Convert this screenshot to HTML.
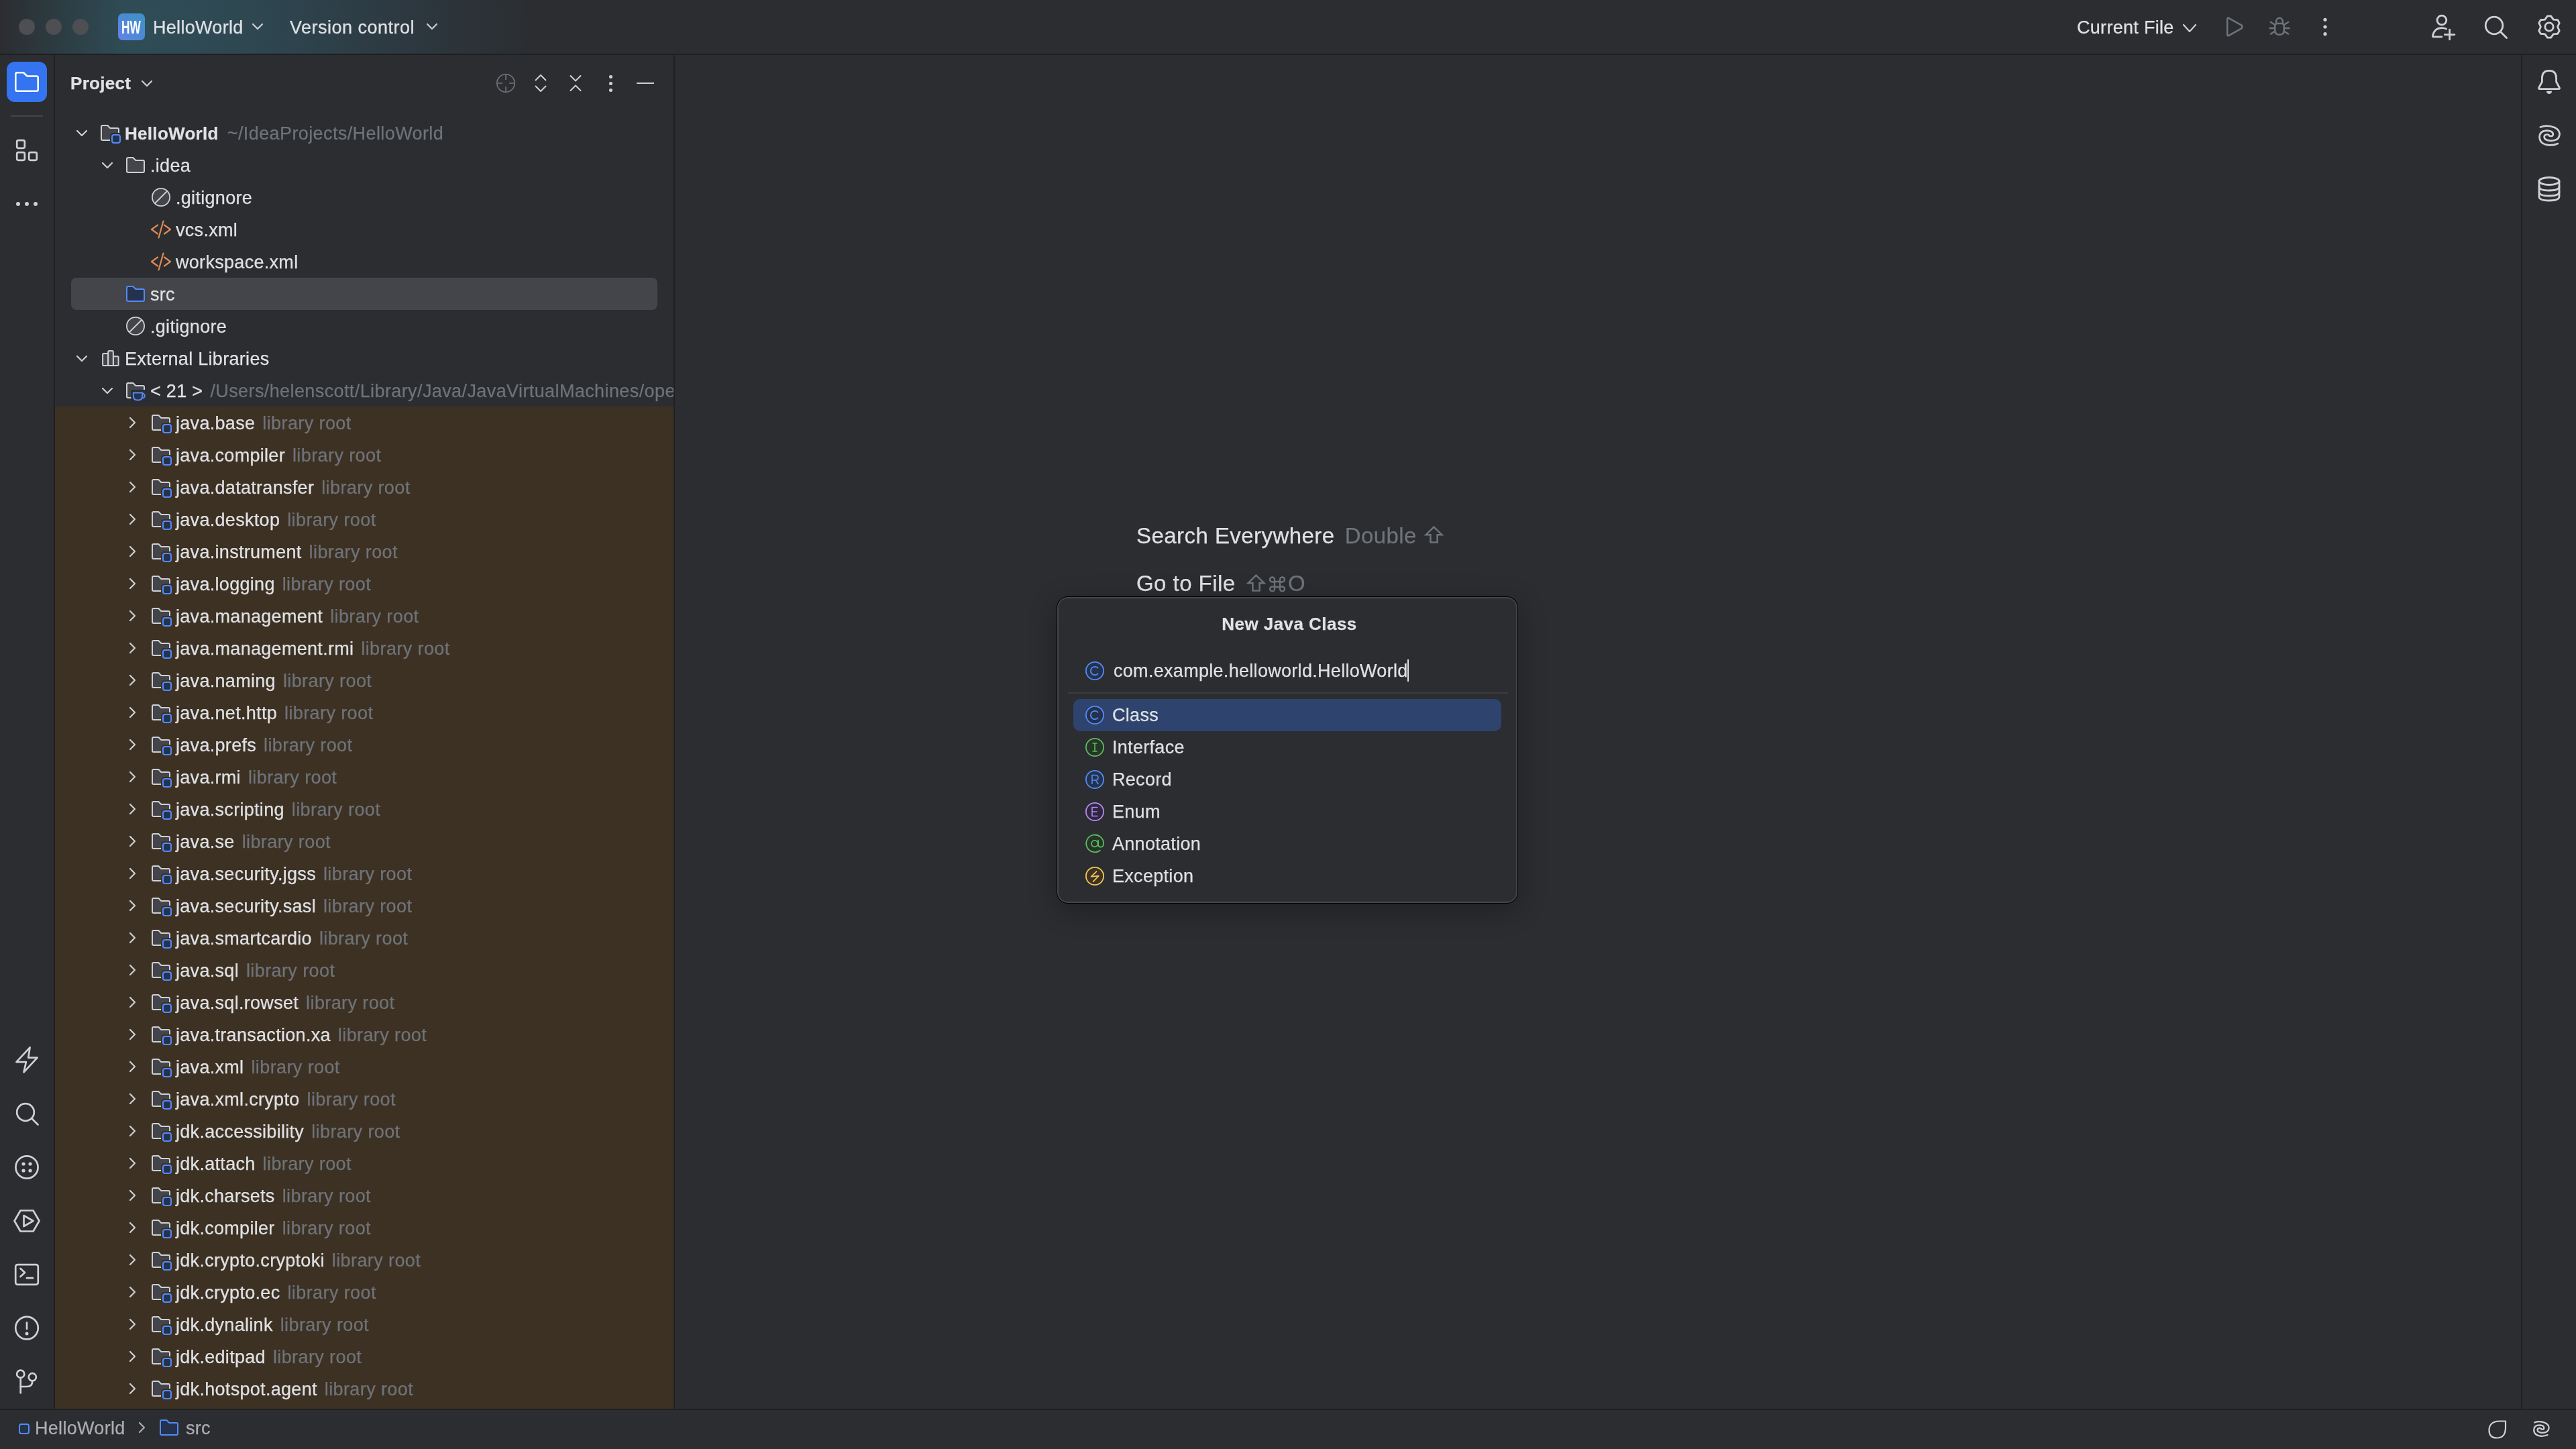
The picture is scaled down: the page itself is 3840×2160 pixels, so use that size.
<!DOCTYPE html>
<html><head><meta charset="utf-8"><style>
*{box-sizing:border-box;margin:0;padding:0}
html,body{width:3840px;height:2160px;overflow:hidden;background:#2B2D30;font-family:"Liberation Sans",sans-serif;color:#DFE1E5}
#root{position:absolute;left:0;top:0;width:3840px;height:2160px;overflow:hidden;will-change:transform}
.t,.b,.s33{-webkit-text-stroke:0.25px currentColor}
.a{position:absolute}
.t{position:absolute;font-size:27px;letter-spacing:0.3px;white-space:nowrap;line-height:48px}
.b{position:absolute;font-size:26px;font-weight:bold;letter-spacing:0.3px;white-space:nowrap;line-height:48px}
.g{color:#6F737A}
svg{position:absolute;overflow:visible}
</style></head><body>
<div id="root"><div class="a" style="left:0;top:0;width:3840px;height:80px;background:#2B2D30"></div>
<div class="a" style="left:0;top:0;width:1400px;height:80px;background:linear-gradient(to right,#2B2D30 0px,rgba(43,45,48,0.6) 60px,rgba(43,45,48,0) 190px),radial-gradient(ellipse 600px 420px at 200px 40px,#2F4E58 0%,#2E4650 33%,#2D3840 68%,#2B2D30 100%)"></div>
<div class="a" style="left:28px;top:28px;width:24px;height:24px;border-radius:50%;background:#4E4F53"></div>
<div class="a" style="left:68px;top:28px;width:24px;height:24px;border-radius:50%;background:#4E4F53"></div>
<div class="a" style="left:108px;top:28px;width:24px;height:24px;border-radius:50%;background:#4E4F53"></div>
<div class="a" style="left:176px;top:20px;width:40px;height:40px;border-radius:7px;background:linear-gradient(45deg,#6383EB 0%,#4C89D6 50%,#3D92C2 100%)"></div>
<div class="a" style="left:173px;top:20px;width:40px;height:40px;line-height:42px;text-align:center;color:#fff;font-size:27px;font-weight:bold"><span style="display:inline-block;transform:scaleX(0.64)">HW</span></div>
<div class="t" style="left:228px;top:17px">HelloWorld</div>
<svg style="left:376px;top:35px" width="16" height="9" viewBox="0 0 16 9"><path d="M1 1 L8.0 8 L15 1" fill="none" stroke="#CED0D6" stroke-width="2.2" stroke-linecap="round" stroke-linejoin="round"/></svg>
<div class="t" style="left:432px;top:17px;letter-spacing:0.5px">Version control</div>
<svg style="left:636px;top:35px" width="16" height="9" viewBox="0 0 16 9"><path d="M1 1 L8.0 8 L15 1" fill="none" stroke="#CED0D6" stroke-width="2.2" stroke-linecap="round" stroke-linejoin="round"/></svg>
<div class="t" style="left:3096px;top:17px">Current File</div>
<svg style="left:3254px;top:36px" width="20" height="12" viewBox="0 0 20 12"><path d="M1 1 L10.0 11 L19 1" fill="none" stroke="#CED0D6" stroke-width="2.2" stroke-linecap="round" stroke-linejoin="round"/></svg>
<svg style="left:0;top:0" width="3840" height="80" viewBox="0 0 3840 80"><path d="M3320.2 28.5 Q3320.2 25.8 3322.6 27.1 L3341.4 37.6 Q3343.6 40 3341.4 42.4 L3322.6 52.9 Q3320.2 54.2 3320.2 51.5 Z" fill="none" stroke="#6F737A" stroke-width="2.5" stroke-linejoin="round"/><g fill="none" stroke="#6F737A" stroke-width="2.5" stroke-linecap="round" stroke-linejoin="round"><path d="M3393.2 33.5 V32 A4.8 5.2 0 0 1 3402.8 32 V33.5"/><path d="M3391.25 39 Q3391.25 35 3395 35 H3401 Q3404.75 35 3404.75 39 V45 Q3404.75 51.8 3398 51.8 Q3391.25 51.8 3391.25 45 Z"/><path d="M3384.9 33 L3390 36.2 M3383.5 42 L3390 42 M3385 50.5 L3390 47.4 M3411.1 33 L3406 36.2 M3412.5 42 L3406 42 M3411 50.5 L3406 47.4"/></g><g fill="#CED0D6"><circle cx="3466" cy="29.3" r="2.6"/><circle cx="3466" cy="40" r="2.6"/><circle cx="3466" cy="50.7" r="2.6"/></g><g fill="none" stroke="#CED0D6" stroke-width="2.8" stroke-linecap="round" stroke-linejoin="round"><circle cx="3639.9" cy="30.1" r="6.9"/><path d="M3639.9 54.8 H3627.5 Q3626 54.8 3626.5 53 Q3629 41.6 3640 41.6 Q3643.8 41.6 3646.5 43"/><path d="M3651.6 44.2 V58.8 M3644.3 51.6 H3658.9"/><circle cx="3718" cy="38" r="12.8"/><path d="M3727.3 47.3 L3736.6 56.6"/><path d="M3802.55 23.90 L3797.45 23.90 L3793.70 29.09 L3787.33 29.74 L3784.78 34.16 L3787.40 40.00 L3784.78 45.84 L3787.33 50.26 L3793.70 50.91 L3797.45 56.10 L3802.55 56.10 L3806.30 50.91 L3812.67 50.26 L3815.22 45.84 L3812.60 40.00 L3815.22 34.16 L3812.67 29.74 L3806.30 29.09 L3802.55 23.90 Z"/><circle cx="3800" cy="40" r="6.2"/></g></svg>
<div class="a" style="left:0;top:80px;width:3840px;height:2px;background:#1E1F22"></div>
<div class="a" style="left:80px;top:82px;width:2px;height:2018px;background:#1E1F22"></div>
<div class="a" style="left:1004px;top:82px;width:2px;height:2018px;background:#1E1F22"></div>
<div class="a" style="left:3758px;top:82px;width:2px;height:2018px;background:#1E1F22"></div>
<div class="a" style="left:0;top:2100px;width:3840px;height:2px;background:#1E1F22"></div>
<div class="a" style="left:10px;top:92px;width:60px;height:60px;border-radius:12px;background:#3574F0"></div>
<svg style="left:10px;top:92px" width="60" height="60" viewBox="0 0 60 60"><path d="M15.5 16.3 H25 L30.5 21.5 H44.5 Q46.7 21.5 46.7 23.7 V41.5 Q46.7 43.7 44.5 43.7 H15.5 Q13.3 43.7 13.3 41.5 V18.5 Q13.3 16.3 15.5 16.3 Z" fill="none" stroke="#fff" stroke-width="2.6" stroke-linejoin="round"/></svg>
<div class="a" style="left:16px;top:172px;width:48px;height:2px;background:#43454A"></div>
<svg style="left:20px;top:204px" width="40" height="40" viewBox="0 0 40 40"><g fill="none" stroke="#CED0D6" stroke-width="2.7"><rect x="5.2" y="5.2" width="11.6" height="11.6" rx="2.2"/><rect x="5.2" y="23.2" width="11.6" height="11.6" rx="2.2"/><rect x="23.2" y="23.2" width="11.6" height="11.6" rx="2.2"/></g></svg>
<div class="a" style="left:24px;top:301px;width:6px;height:6px;border-radius:50%;background:#CED0D6"></div>
<div class="a" style="left:37px;top:301px;width:6px;height:6px;border-radius:50%;background:#CED0D6"></div>
<div class="a" style="left:50px;top:301px;width:6px;height:6px;border-radius:50%;background:#CED0D6"></div>
<svg style="left:0;top:0" width="80" height="2160" viewBox="0 0 80 2160"><g fill="none" stroke="#CED0D6" stroke-width="2.7" stroke-linejoin="round" stroke-linecap="round"><path d="M44.6 1561.4 L24.4 1583.1 L38.9 1583.1 L35.5 1598.3 L55.6 1576.6 L42.2 1576.6 Z"/><circle cx="38" cy="1658" r="12.8"/><path d="M47.2 1667.2 L56.5 1676.5"/><circle cx="40" cy="1740" r="16.6"/><path d="M30.5 1804.5 L49.5 1804.5 L58.5 1820 L49.5 1835.5 L30.5 1835.5 L21.5 1820 Z"/><path d="M35.5 1812 L49.5 1820 L35.5 1828 Z"/><rect x="23.2" y="1885.2" width="33.6" height="29.6" rx="3"/><path d="M30.5 1891 L37 1897 L30.5 1903"/><path d="M40 1905.2 L49 1905.2"/><circle cx="40" cy="1979.6" r="16.8"/><path d="M40 1971.5 L40 1981"/><circle cx="30.7" cy="2048.2" r="5.6"/><circle cx="48.3" cy="2052.8" r="5.6"/><path d="M30.7 2053.8 L30.7 2076.5"/><path d="M48.3 2058.4 Q48.3 2067 40 2067 L30.7 2067"/></g><g fill="#CED0D6"><circle cx="35" cy="1735" r="2.6"/><circle cx="45" cy="1735" r="2.6"/><circle cx="35" cy="1745" r="2.6"/><circle cx="45" cy="1745" r="2.6"/><circle cx="40" cy="1988" r="2.5"/></g></svg>
<svg style="left:3760px;top:80px" width="80" height="240" viewBox="0 0 80 240"><g fill="none" stroke="#CED0D6" stroke-width="2.8" stroke-linejoin="round" stroke-linecap="round"><path d="M40 25.3 Q29.4 25.3 29.4 36.5 V42 L24.8 50.5 Q23.8 52.7 26 52.7 H54 Q56.2 52.7 55.2 50.5 L50.6 42 V36.5 Q50.6 25.3 40 25.3 Z"/><ellipse cx="40" cy="190" rx="15" ry="5.5"/><path d="M25 190 L25 213 Q25 219 40 219 Q55 219 55 213 L55 190"/><path d="M25 198 Q25 204 40 204 Q55 204 55 198"/><path d="M25 206 Q25 212 40 212 Q55 212 55 206"/></g><path d="M35.8 55.8 H44.2 Q43.5 60.1 40 60.1 Q36.5 60.1 35.8 55.8 Z" fill="#CED0D6"/></svg>
<svg style="left:3776px;top:178px" width="48.0" height="48.0" viewBox="0 0 48 48"><g fill="none" stroke="#CED0D6" stroke-width="2.70" stroke-linecap="round"><path d="M10.9 11.4 Q21 7.5 32 12 Q39.8 16 39.5 22.5 Q38.5 31.8 26.5 31.8 Q16.6 31.5 16.6 25.8 Q17 22.5 21.2 22.5 Q23.5 22.5 24.2 23.8"/><path d="M36.8 36.1 Q31 38.6 24 38.4 Q9.6 37 9.6 26 Q10 16.6 21.2 16.6 Q29.8 17 29.8 22.5 Q29.5 25 26.5 25 Q24.8 25 24.2 24.5"/></g></svg>
<div class="b" style="left:105px;top:100px">Project</div>
<svg style="left:211px;top:120px" width="16" height="9" viewBox="0 0 16 9"><path d="M1 1 L8.0 8 L15 1" fill="none" stroke="#CED0D6" stroke-width="2.2" stroke-linecap="round" stroke-linejoin="round"/></svg>
<svg style="left:738px;top:108px" width="32" height="32" viewBox="0 0 32 32"><g fill="none" stroke="#6F737A" stroke-width="1.6"><circle cx="16" cy="16" r="13.2"/><path d="M16 3 L16 11 M16 21 L16 29 M3 16 L11 16 M21 16 L29 16"/></g></svg>
<svg style="left:790px;top:108px" width="32" height="32" viewBox="0 0 32 32"><g fill="none" stroke="#CED0D6" stroke-width="2" stroke-linecap="round" stroke-linejoin="round"><path d="M8.5 11.5 L16 4 L23.5 11.5"/><path d="M8.5 20.5 L16 28 L23.5 20.5"/></g></svg>
<svg style="left:842px;top:108px" width="32" height="32" viewBox="0 0 32 32"><g fill="none" stroke="#CED0D6" stroke-width="2" stroke-linecap="round" stroke-linejoin="round"><path d="M8.5 5 L16 12.5 L23.5 5"/><path d="M8.5 27 L16 19.5 L23.5 27"/></g></svg>
<div class="a" style="left:908px;top:112px;width:4.5px;height:4.5px;border-radius:50%;background:#CED0D6"></div>
<div class="a" style="left:908px;top:122px;width:4.5px;height:4.5px;border-radius:50%;background:#CED0D6"></div>
<div class="a" style="left:908px;top:132px;width:4.5px;height:4.5px;border-radius:50%;background:#CED0D6"></div>
<div class="a" style="left:949px;top:123px;width:26px;height:2px;background:#CED0D6"></div>
<div class="a" style="left:82px;top:82px;width:922px;height:2018px;overflow:hidden">
<div class="a" style="left:0;top:524px;width:922px;height:1494px;background:#3D3123"></div>
<div class="a" style="left:24px;top:332px;width:874px;height:48px;border-radius:8px;background:#43454A"></div>
<svg style="left:32px;top:112px" width="16" height="9" viewBox="0 0 16 9"><path d="M1 1 L8.0 8 L15 1" fill="none" stroke="#CED0D6" stroke-width="2.2" stroke-linecap="round" stroke-linejoin="round"/></svg>
<svg style="left:66px;top:100px" width="32" height="32" viewBox="0 0 32 32"><path d="M5 5 H12.3 L16.3 9 H27 Q29 9 29 11 V25 Q29 27 27 27 H5 Q3 27 3 25 V7 Q3 5 5 5 Z" fill="#43454A" stroke="#CED0D6" stroke-width="2" stroke-linejoin="round"/><rect x="16" y="16" width="18" height="18" rx="5" fill="#2B2D30"/><rect x="19" y="19" width="12" height="12" rx="3" fill="#25324D" stroke="#548AF7" stroke-width="2"/></svg>
<div class="b" style="left:104px;top:93px">HelloWorld<span class="g" style="font-weight:normal;font-size:27px;letter-spacing:0.4px;margin-left:13px">~/IdeaProjects/HelloWorld</span></div>
<svg style="left:70px;top:160px" width="16" height="9" viewBox="0 0 16 9"><path d="M1 1 L8.0 8 L15 1" fill="none" stroke="#CED0D6" stroke-width="2.2" stroke-linecap="round" stroke-linejoin="round"/></svg>
<svg style="left:104px;top:148px" width="32" height="32" viewBox="0 0 32 32"><path d="M5 5 H12.3 L16.3 9 H27 Q29 9 29 11 V25 Q29 27 27 27 H5 Q3 27 3 25 V7 Q3 5 5 5 Z" fill="#43454A" stroke="#CED0D6" stroke-width="2" stroke-linejoin="round"/></svg>
<div class="t" style="left:142px;top:141px">.idea</div>
<svg style="left:142px;top:196px" width="32" height="32" viewBox="0 0 32 32"><circle cx="16" cy="16" r="13.1" fill="#43454A" stroke="#CED0D6" stroke-width="1.8"/><path d="M7 25 L25 7" stroke="#CED0D6" stroke-width="1.8"/></svg>
<div class="t" style="left:180px;top:189px">.gitignore</div>
<svg style="left:142px;top:244px" width="32" height="32" viewBox="0 0 32 32"><g fill="none" stroke="#E08855" stroke-width="2.2" stroke-linecap="round" stroke-linejoin="round"><path d="M11 9.5 L2 16 L11 22.5"/><path d="M21 9.5 L30 16 L21 22.5"/><path d="M19.5 3.5 L12.5 28.5"/></g></svg>
<div class="t" style="left:180px;top:237px">vcs.xml</div>
<svg style="left:142px;top:292px" width="32" height="32" viewBox="0 0 32 32"><g fill="none" stroke="#E08855" stroke-width="2.2" stroke-linecap="round" stroke-linejoin="round"><path d="M11 9.5 L2 16 L11 22.5"/><path d="M21 9.5 L30 16 L21 22.5"/><path d="M19.5 3.5 L12.5 28.5"/></g></svg>
<div class="t" style="left:180px;top:285px">workspace.xml</div>
<svg style="left:104px;top:340px" width="32" height="32" viewBox="0 0 32 32"><path d="M5 5 H12.3 L16.3 9 H27 Q29 9 29 11 V25 Q29 27 27 27 H5 Q3 27 3 25 V7 Q3 5 5 5 Z" fill="#25324D" stroke="#548AF7" stroke-width="2" stroke-linejoin="round"/></svg>
<div class="t" style="left:142px;top:333px">src</div>
<svg style="left:104px;top:388px" width="32" height="32" viewBox="0 0 32 32"><circle cx="16" cy="16" r="13.1" fill="#43454A" stroke="#CED0D6" stroke-width="1.8"/><path d="M7 25 L25 7" stroke="#CED0D6" stroke-width="1.8"/></svg>
<div class="t" style="left:142px;top:381px">.gitignore</div>
<svg style="left:32px;top:448px" width="16" height="9" viewBox="0 0 16 9"><path d="M1 1 L8.0 8 L15 1" fill="none" stroke="#CED0D6" stroke-width="2.2" stroke-linecap="round" stroke-linejoin="round"/></svg>
<svg style="left:66px;top:436px" width="32" height="32" viewBox="0 0 32 32"><g fill="#43454A" stroke="#CED0D6" stroke-width="2" stroke-linejoin="round"><rect x="5.1" y="9.1" width="8.1" height="17.9" rx="1.6"/><rect x="20.8" y="13.2" width="7.8" height="13.8" rx="1.6"/><rect x="13.2" y="5.1" width="7.6" height="21.9" rx="1.6"/></g></svg>
<div class="t" style="left:104px;top:429px">External Libraries</div>
<svg style="left:70px;top:496px" width="16" height="9" viewBox="0 0 16 9"><path d="M1 1 L8.0 8 L15 1" fill="none" stroke="#CED0D6" stroke-width="2.2" stroke-linecap="round" stroke-linejoin="round"/></svg>
<svg style="left:104px;top:484px" width="32" height="32" viewBox="0 0 32 32"><path d="M5 5 H12.3 L16.3 9 H27 Q29 9 29 11 V25 Q29 27 27 27 H5 Q3 27 3 25 V7 Q3 5 5 5 Z" fill="#43454A" stroke="#CED0D6" stroke-width="2" stroke-linejoin="round"/><path d="M9 15 H33 V27 Q33 34 19 34 Q9 34 9 24 Z" fill="#2B2D30"/><path d="M12.8 19.5 H26.3 V24 Q26.3 30.6 19.5 30.6 Q12.8 30.6 12.8 24 Z" fill="#25324D" stroke="#548AF7" stroke-width="2" stroke-linejoin="round"/><path d="M26.3 20.6 A3.5 3.5 0 0 1 26.3 27.6" fill="none" stroke="#548AF7" stroke-width="2"/></svg>
<div class="t" style="left:142px;top:477px">&lt; 21 &gt;<span class="g" style="font-weight:normal;font-size:27px;letter-spacing:0.4px;margin-left:11px">/Users/helenscott/Library/Java/JavaVirtualMachines/openjdk-21/Contents/Home</span></div>
<svg style="left:111px;top:540px" width="9" height="16" viewBox="0 0 9 16"><path d="M1 1 L8 8.0 L1 15" fill="none" stroke="#CED0D6" stroke-width="2.2" stroke-linecap="round" stroke-linejoin="round"/></svg>
<svg style="left:142px;top:532px" width="32" height="32" viewBox="0 0 32 32"><path d="M5 5 H12.3 L16.3 9 H27 Q29 9 29 11 V25 Q29 27 27 27 H5 Q3 27 3 25 V7 Q3 5 5 5 Z" fill="#43454A" stroke="#CED0D6" stroke-width="2" stroke-linejoin="round"/><rect x="16" y="16" width="18" height="18" rx="5" fill="#3D3123"/><rect x="19" y="19" width="12" height="12" rx="3" fill="#25324D" stroke="#548AF7" stroke-width="2"/></svg>
<div class="t" style="left:180px;top:525px">java.base<span class="g" style="font-weight:normal;font-size:27px;letter-spacing:0.4px;margin-left:11px">library root</span></div>
<svg style="left:111px;top:588px" width="9" height="16" viewBox="0 0 9 16"><path d="M1 1 L8 8.0 L1 15" fill="none" stroke="#CED0D6" stroke-width="2.2" stroke-linecap="round" stroke-linejoin="round"/></svg>
<svg style="left:142px;top:580px" width="32" height="32" viewBox="0 0 32 32"><path d="M5 5 H12.3 L16.3 9 H27 Q29 9 29 11 V25 Q29 27 27 27 H5 Q3 27 3 25 V7 Q3 5 5 5 Z" fill="#43454A" stroke="#CED0D6" stroke-width="2" stroke-linejoin="round"/><rect x="16" y="16" width="18" height="18" rx="5" fill="#3D3123"/><rect x="19" y="19" width="12" height="12" rx="3" fill="#25324D" stroke="#548AF7" stroke-width="2"/></svg>
<div class="t" style="left:180px;top:573px">java.compiler<span class="g" style="font-weight:normal;font-size:27px;letter-spacing:0.4px;margin-left:11px">library root</span></div>
<svg style="left:111px;top:636px" width="9" height="16" viewBox="0 0 9 16"><path d="M1 1 L8 8.0 L1 15" fill="none" stroke="#CED0D6" stroke-width="2.2" stroke-linecap="round" stroke-linejoin="round"/></svg>
<svg style="left:142px;top:628px" width="32" height="32" viewBox="0 0 32 32"><path d="M5 5 H12.3 L16.3 9 H27 Q29 9 29 11 V25 Q29 27 27 27 H5 Q3 27 3 25 V7 Q3 5 5 5 Z" fill="#43454A" stroke="#CED0D6" stroke-width="2" stroke-linejoin="round"/><rect x="16" y="16" width="18" height="18" rx="5" fill="#3D3123"/><rect x="19" y="19" width="12" height="12" rx="3" fill="#25324D" stroke="#548AF7" stroke-width="2"/></svg>
<div class="t" style="left:180px;top:621px">java.datatransfer<span class="g" style="font-weight:normal;font-size:27px;letter-spacing:0.4px;margin-left:11px">library root</span></div>
<svg style="left:111px;top:684px" width="9" height="16" viewBox="0 0 9 16"><path d="M1 1 L8 8.0 L1 15" fill="none" stroke="#CED0D6" stroke-width="2.2" stroke-linecap="round" stroke-linejoin="round"/></svg>
<svg style="left:142px;top:676px" width="32" height="32" viewBox="0 0 32 32"><path d="M5 5 H12.3 L16.3 9 H27 Q29 9 29 11 V25 Q29 27 27 27 H5 Q3 27 3 25 V7 Q3 5 5 5 Z" fill="#43454A" stroke="#CED0D6" stroke-width="2" stroke-linejoin="round"/><rect x="16" y="16" width="18" height="18" rx="5" fill="#3D3123"/><rect x="19" y="19" width="12" height="12" rx="3" fill="#25324D" stroke="#548AF7" stroke-width="2"/></svg>
<div class="t" style="left:180px;top:669px">java.desktop<span class="g" style="font-weight:normal;font-size:27px;letter-spacing:0.4px;margin-left:11px">library root</span></div>
<svg style="left:111px;top:732px" width="9" height="16" viewBox="0 0 9 16"><path d="M1 1 L8 8.0 L1 15" fill="none" stroke="#CED0D6" stroke-width="2.2" stroke-linecap="round" stroke-linejoin="round"/></svg>
<svg style="left:142px;top:724px" width="32" height="32" viewBox="0 0 32 32"><path d="M5 5 H12.3 L16.3 9 H27 Q29 9 29 11 V25 Q29 27 27 27 H5 Q3 27 3 25 V7 Q3 5 5 5 Z" fill="#43454A" stroke="#CED0D6" stroke-width="2" stroke-linejoin="round"/><rect x="16" y="16" width="18" height="18" rx="5" fill="#3D3123"/><rect x="19" y="19" width="12" height="12" rx="3" fill="#25324D" stroke="#548AF7" stroke-width="2"/></svg>
<div class="t" style="left:180px;top:717px">java.instrument<span class="g" style="font-weight:normal;font-size:27px;letter-spacing:0.4px;margin-left:11px">library root</span></div>
<svg style="left:111px;top:780px" width="9" height="16" viewBox="0 0 9 16"><path d="M1 1 L8 8.0 L1 15" fill="none" stroke="#CED0D6" stroke-width="2.2" stroke-linecap="round" stroke-linejoin="round"/></svg>
<svg style="left:142px;top:772px" width="32" height="32" viewBox="0 0 32 32"><path d="M5 5 H12.3 L16.3 9 H27 Q29 9 29 11 V25 Q29 27 27 27 H5 Q3 27 3 25 V7 Q3 5 5 5 Z" fill="#43454A" stroke="#CED0D6" stroke-width="2" stroke-linejoin="round"/><rect x="16" y="16" width="18" height="18" rx="5" fill="#3D3123"/><rect x="19" y="19" width="12" height="12" rx="3" fill="#25324D" stroke="#548AF7" stroke-width="2"/></svg>
<div class="t" style="left:180px;top:765px">java.logging<span class="g" style="font-weight:normal;font-size:27px;letter-spacing:0.4px;margin-left:11px">library root</span></div>
<svg style="left:111px;top:828px" width="9" height="16" viewBox="0 0 9 16"><path d="M1 1 L8 8.0 L1 15" fill="none" stroke="#CED0D6" stroke-width="2.2" stroke-linecap="round" stroke-linejoin="round"/></svg>
<svg style="left:142px;top:820px" width="32" height="32" viewBox="0 0 32 32"><path d="M5 5 H12.3 L16.3 9 H27 Q29 9 29 11 V25 Q29 27 27 27 H5 Q3 27 3 25 V7 Q3 5 5 5 Z" fill="#43454A" stroke="#CED0D6" stroke-width="2" stroke-linejoin="round"/><rect x="16" y="16" width="18" height="18" rx="5" fill="#3D3123"/><rect x="19" y="19" width="12" height="12" rx="3" fill="#25324D" stroke="#548AF7" stroke-width="2"/></svg>
<div class="t" style="left:180px;top:813px">java.management<span class="g" style="font-weight:normal;font-size:27px;letter-spacing:0.4px;margin-left:11px">library root</span></div>
<svg style="left:111px;top:876px" width="9" height="16" viewBox="0 0 9 16"><path d="M1 1 L8 8.0 L1 15" fill="none" stroke="#CED0D6" stroke-width="2.2" stroke-linecap="round" stroke-linejoin="round"/></svg>
<svg style="left:142px;top:868px" width="32" height="32" viewBox="0 0 32 32"><path d="M5 5 H12.3 L16.3 9 H27 Q29 9 29 11 V25 Q29 27 27 27 H5 Q3 27 3 25 V7 Q3 5 5 5 Z" fill="#43454A" stroke="#CED0D6" stroke-width="2" stroke-linejoin="round"/><rect x="16" y="16" width="18" height="18" rx="5" fill="#3D3123"/><rect x="19" y="19" width="12" height="12" rx="3" fill="#25324D" stroke="#548AF7" stroke-width="2"/></svg>
<div class="t" style="left:180px;top:861px">java.management.rmi<span class="g" style="font-weight:normal;font-size:27px;letter-spacing:0.4px;margin-left:11px">library root</span></div>
<svg style="left:111px;top:924px" width="9" height="16" viewBox="0 0 9 16"><path d="M1 1 L8 8.0 L1 15" fill="none" stroke="#CED0D6" stroke-width="2.2" stroke-linecap="round" stroke-linejoin="round"/></svg>
<svg style="left:142px;top:916px" width="32" height="32" viewBox="0 0 32 32"><path d="M5 5 H12.3 L16.3 9 H27 Q29 9 29 11 V25 Q29 27 27 27 H5 Q3 27 3 25 V7 Q3 5 5 5 Z" fill="#43454A" stroke="#CED0D6" stroke-width="2" stroke-linejoin="round"/><rect x="16" y="16" width="18" height="18" rx="5" fill="#3D3123"/><rect x="19" y="19" width="12" height="12" rx="3" fill="#25324D" stroke="#548AF7" stroke-width="2"/></svg>
<div class="t" style="left:180px;top:909px">java.naming<span class="g" style="font-weight:normal;font-size:27px;letter-spacing:0.4px;margin-left:11px">library root</span></div>
<svg style="left:111px;top:972px" width="9" height="16" viewBox="0 0 9 16"><path d="M1 1 L8 8.0 L1 15" fill="none" stroke="#CED0D6" stroke-width="2.2" stroke-linecap="round" stroke-linejoin="round"/></svg>
<svg style="left:142px;top:964px" width="32" height="32" viewBox="0 0 32 32"><path d="M5 5 H12.3 L16.3 9 H27 Q29 9 29 11 V25 Q29 27 27 27 H5 Q3 27 3 25 V7 Q3 5 5 5 Z" fill="#43454A" stroke="#CED0D6" stroke-width="2" stroke-linejoin="round"/><rect x="16" y="16" width="18" height="18" rx="5" fill="#3D3123"/><rect x="19" y="19" width="12" height="12" rx="3" fill="#25324D" stroke="#548AF7" stroke-width="2"/></svg>
<div class="t" style="left:180px;top:957px">java.net.http<span class="g" style="font-weight:normal;font-size:27px;letter-spacing:0.4px;margin-left:11px">library root</span></div>
<svg style="left:111px;top:1020px" width="9" height="16" viewBox="0 0 9 16"><path d="M1 1 L8 8.0 L1 15" fill="none" stroke="#CED0D6" stroke-width="2.2" stroke-linecap="round" stroke-linejoin="round"/></svg>
<svg style="left:142px;top:1012px" width="32" height="32" viewBox="0 0 32 32"><path d="M5 5 H12.3 L16.3 9 H27 Q29 9 29 11 V25 Q29 27 27 27 H5 Q3 27 3 25 V7 Q3 5 5 5 Z" fill="#43454A" stroke="#CED0D6" stroke-width="2" stroke-linejoin="round"/><rect x="16" y="16" width="18" height="18" rx="5" fill="#3D3123"/><rect x="19" y="19" width="12" height="12" rx="3" fill="#25324D" stroke="#548AF7" stroke-width="2"/></svg>
<div class="t" style="left:180px;top:1005px">java.prefs<span class="g" style="font-weight:normal;font-size:27px;letter-spacing:0.4px;margin-left:11px">library root</span></div>
<svg style="left:111px;top:1068px" width="9" height="16" viewBox="0 0 9 16"><path d="M1 1 L8 8.0 L1 15" fill="none" stroke="#CED0D6" stroke-width="2.2" stroke-linecap="round" stroke-linejoin="round"/></svg>
<svg style="left:142px;top:1060px" width="32" height="32" viewBox="0 0 32 32"><path d="M5 5 H12.3 L16.3 9 H27 Q29 9 29 11 V25 Q29 27 27 27 H5 Q3 27 3 25 V7 Q3 5 5 5 Z" fill="#43454A" stroke="#CED0D6" stroke-width="2" stroke-linejoin="round"/><rect x="16" y="16" width="18" height="18" rx="5" fill="#3D3123"/><rect x="19" y="19" width="12" height="12" rx="3" fill="#25324D" stroke="#548AF7" stroke-width="2"/></svg>
<div class="t" style="left:180px;top:1053px">java.rmi<span class="g" style="font-weight:normal;font-size:27px;letter-spacing:0.4px;margin-left:11px">library root</span></div>
<svg style="left:111px;top:1116px" width="9" height="16" viewBox="0 0 9 16"><path d="M1 1 L8 8.0 L1 15" fill="none" stroke="#CED0D6" stroke-width="2.2" stroke-linecap="round" stroke-linejoin="round"/></svg>
<svg style="left:142px;top:1108px" width="32" height="32" viewBox="0 0 32 32"><path d="M5 5 H12.3 L16.3 9 H27 Q29 9 29 11 V25 Q29 27 27 27 H5 Q3 27 3 25 V7 Q3 5 5 5 Z" fill="#43454A" stroke="#CED0D6" stroke-width="2" stroke-linejoin="round"/><rect x="16" y="16" width="18" height="18" rx="5" fill="#3D3123"/><rect x="19" y="19" width="12" height="12" rx="3" fill="#25324D" stroke="#548AF7" stroke-width="2"/></svg>
<div class="t" style="left:180px;top:1101px">java.scripting<span class="g" style="font-weight:normal;font-size:27px;letter-spacing:0.4px;margin-left:11px">library root</span></div>
<svg style="left:111px;top:1164px" width="9" height="16" viewBox="0 0 9 16"><path d="M1 1 L8 8.0 L1 15" fill="none" stroke="#CED0D6" stroke-width="2.2" stroke-linecap="round" stroke-linejoin="round"/></svg>
<svg style="left:142px;top:1156px" width="32" height="32" viewBox="0 0 32 32"><path d="M5 5 H12.3 L16.3 9 H27 Q29 9 29 11 V25 Q29 27 27 27 H5 Q3 27 3 25 V7 Q3 5 5 5 Z" fill="#43454A" stroke="#CED0D6" stroke-width="2" stroke-linejoin="round"/><rect x="16" y="16" width="18" height="18" rx="5" fill="#3D3123"/><rect x="19" y="19" width="12" height="12" rx="3" fill="#25324D" stroke="#548AF7" stroke-width="2"/></svg>
<div class="t" style="left:180px;top:1149px">java.se<span class="g" style="font-weight:normal;font-size:27px;letter-spacing:0.4px;margin-left:11px">library root</span></div>
<svg style="left:111px;top:1212px" width="9" height="16" viewBox="0 0 9 16"><path d="M1 1 L8 8.0 L1 15" fill="none" stroke="#CED0D6" stroke-width="2.2" stroke-linecap="round" stroke-linejoin="round"/></svg>
<svg style="left:142px;top:1204px" width="32" height="32" viewBox="0 0 32 32"><path d="M5 5 H12.3 L16.3 9 H27 Q29 9 29 11 V25 Q29 27 27 27 H5 Q3 27 3 25 V7 Q3 5 5 5 Z" fill="#43454A" stroke="#CED0D6" stroke-width="2" stroke-linejoin="round"/><rect x="16" y="16" width="18" height="18" rx="5" fill="#3D3123"/><rect x="19" y="19" width="12" height="12" rx="3" fill="#25324D" stroke="#548AF7" stroke-width="2"/></svg>
<div class="t" style="left:180px;top:1197px">java.security.jgss<span class="g" style="font-weight:normal;font-size:27px;letter-spacing:0.4px;margin-left:11px">library root</span></div>
<svg style="left:111px;top:1260px" width="9" height="16" viewBox="0 0 9 16"><path d="M1 1 L8 8.0 L1 15" fill="none" stroke="#CED0D6" stroke-width="2.2" stroke-linecap="round" stroke-linejoin="round"/></svg>
<svg style="left:142px;top:1252px" width="32" height="32" viewBox="0 0 32 32"><path d="M5 5 H12.3 L16.3 9 H27 Q29 9 29 11 V25 Q29 27 27 27 H5 Q3 27 3 25 V7 Q3 5 5 5 Z" fill="#43454A" stroke="#CED0D6" stroke-width="2" stroke-linejoin="round"/><rect x="16" y="16" width="18" height="18" rx="5" fill="#3D3123"/><rect x="19" y="19" width="12" height="12" rx="3" fill="#25324D" stroke="#548AF7" stroke-width="2"/></svg>
<div class="t" style="left:180px;top:1245px">java.security.sasl<span class="g" style="font-weight:normal;font-size:27px;letter-spacing:0.4px;margin-left:11px">library root</span></div>
<svg style="left:111px;top:1308px" width="9" height="16" viewBox="0 0 9 16"><path d="M1 1 L8 8.0 L1 15" fill="none" stroke="#CED0D6" stroke-width="2.2" stroke-linecap="round" stroke-linejoin="round"/></svg>
<svg style="left:142px;top:1300px" width="32" height="32" viewBox="0 0 32 32"><path d="M5 5 H12.3 L16.3 9 H27 Q29 9 29 11 V25 Q29 27 27 27 H5 Q3 27 3 25 V7 Q3 5 5 5 Z" fill="#43454A" stroke="#CED0D6" stroke-width="2" stroke-linejoin="round"/><rect x="16" y="16" width="18" height="18" rx="5" fill="#3D3123"/><rect x="19" y="19" width="12" height="12" rx="3" fill="#25324D" stroke="#548AF7" stroke-width="2"/></svg>
<div class="t" style="left:180px;top:1293px">java.smartcardio<span class="g" style="font-weight:normal;font-size:27px;letter-spacing:0.4px;margin-left:11px">library root</span></div>
<svg style="left:111px;top:1356px" width="9" height="16" viewBox="0 0 9 16"><path d="M1 1 L8 8.0 L1 15" fill="none" stroke="#CED0D6" stroke-width="2.2" stroke-linecap="round" stroke-linejoin="round"/></svg>
<svg style="left:142px;top:1348px" width="32" height="32" viewBox="0 0 32 32"><path d="M5 5 H12.3 L16.3 9 H27 Q29 9 29 11 V25 Q29 27 27 27 H5 Q3 27 3 25 V7 Q3 5 5 5 Z" fill="#43454A" stroke="#CED0D6" stroke-width="2" stroke-linejoin="round"/><rect x="16" y="16" width="18" height="18" rx="5" fill="#3D3123"/><rect x="19" y="19" width="12" height="12" rx="3" fill="#25324D" stroke="#548AF7" stroke-width="2"/></svg>
<div class="t" style="left:180px;top:1341px">java.sql<span class="g" style="font-weight:normal;font-size:27px;letter-spacing:0.4px;margin-left:11px">library root</span></div>
<svg style="left:111px;top:1404px" width="9" height="16" viewBox="0 0 9 16"><path d="M1 1 L8 8.0 L1 15" fill="none" stroke="#CED0D6" stroke-width="2.2" stroke-linecap="round" stroke-linejoin="round"/></svg>
<svg style="left:142px;top:1396px" width="32" height="32" viewBox="0 0 32 32"><path d="M5 5 H12.3 L16.3 9 H27 Q29 9 29 11 V25 Q29 27 27 27 H5 Q3 27 3 25 V7 Q3 5 5 5 Z" fill="#43454A" stroke="#CED0D6" stroke-width="2" stroke-linejoin="round"/><rect x="16" y="16" width="18" height="18" rx="5" fill="#3D3123"/><rect x="19" y="19" width="12" height="12" rx="3" fill="#25324D" stroke="#548AF7" stroke-width="2"/></svg>
<div class="t" style="left:180px;top:1389px">java.sql.rowset<span class="g" style="font-weight:normal;font-size:27px;letter-spacing:0.4px;margin-left:11px">library root</span></div>
<svg style="left:111px;top:1452px" width="9" height="16" viewBox="0 0 9 16"><path d="M1 1 L8 8.0 L1 15" fill="none" stroke="#CED0D6" stroke-width="2.2" stroke-linecap="round" stroke-linejoin="round"/></svg>
<svg style="left:142px;top:1444px" width="32" height="32" viewBox="0 0 32 32"><path d="M5 5 H12.3 L16.3 9 H27 Q29 9 29 11 V25 Q29 27 27 27 H5 Q3 27 3 25 V7 Q3 5 5 5 Z" fill="#43454A" stroke="#CED0D6" stroke-width="2" stroke-linejoin="round"/><rect x="16" y="16" width="18" height="18" rx="5" fill="#3D3123"/><rect x="19" y="19" width="12" height="12" rx="3" fill="#25324D" stroke="#548AF7" stroke-width="2"/></svg>
<div class="t" style="left:180px;top:1437px">java.transaction.xa<span class="g" style="font-weight:normal;font-size:27px;letter-spacing:0.4px;margin-left:11px">library root</span></div>
<svg style="left:111px;top:1500px" width="9" height="16" viewBox="0 0 9 16"><path d="M1 1 L8 8.0 L1 15" fill="none" stroke="#CED0D6" stroke-width="2.2" stroke-linecap="round" stroke-linejoin="round"/></svg>
<svg style="left:142px;top:1492px" width="32" height="32" viewBox="0 0 32 32"><path d="M5 5 H12.3 L16.3 9 H27 Q29 9 29 11 V25 Q29 27 27 27 H5 Q3 27 3 25 V7 Q3 5 5 5 Z" fill="#43454A" stroke="#CED0D6" stroke-width="2" stroke-linejoin="round"/><rect x="16" y="16" width="18" height="18" rx="5" fill="#3D3123"/><rect x="19" y="19" width="12" height="12" rx="3" fill="#25324D" stroke="#548AF7" stroke-width="2"/></svg>
<div class="t" style="left:180px;top:1485px">java.xml<span class="g" style="font-weight:normal;font-size:27px;letter-spacing:0.4px;margin-left:11px">library root</span></div>
<svg style="left:111px;top:1548px" width="9" height="16" viewBox="0 0 9 16"><path d="M1 1 L8 8.0 L1 15" fill="none" stroke="#CED0D6" stroke-width="2.2" stroke-linecap="round" stroke-linejoin="round"/></svg>
<svg style="left:142px;top:1540px" width="32" height="32" viewBox="0 0 32 32"><path d="M5 5 H12.3 L16.3 9 H27 Q29 9 29 11 V25 Q29 27 27 27 H5 Q3 27 3 25 V7 Q3 5 5 5 Z" fill="#43454A" stroke="#CED0D6" stroke-width="2" stroke-linejoin="round"/><rect x="16" y="16" width="18" height="18" rx="5" fill="#3D3123"/><rect x="19" y="19" width="12" height="12" rx="3" fill="#25324D" stroke="#548AF7" stroke-width="2"/></svg>
<div class="t" style="left:180px;top:1533px">java.xml.crypto<span class="g" style="font-weight:normal;font-size:27px;letter-spacing:0.4px;margin-left:11px">library root</span></div>
<svg style="left:111px;top:1596px" width="9" height="16" viewBox="0 0 9 16"><path d="M1 1 L8 8.0 L1 15" fill="none" stroke="#CED0D6" stroke-width="2.2" stroke-linecap="round" stroke-linejoin="round"/></svg>
<svg style="left:142px;top:1588px" width="32" height="32" viewBox="0 0 32 32"><path d="M5 5 H12.3 L16.3 9 H27 Q29 9 29 11 V25 Q29 27 27 27 H5 Q3 27 3 25 V7 Q3 5 5 5 Z" fill="#43454A" stroke="#CED0D6" stroke-width="2" stroke-linejoin="round"/><rect x="16" y="16" width="18" height="18" rx="5" fill="#3D3123"/><rect x="19" y="19" width="12" height="12" rx="3" fill="#25324D" stroke="#548AF7" stroke-width="2"/></svg>
<div class="t" style="left:180px;top:1581px">jdk.accessibility<span class="g" style="font-weight:normal;font-size:27px;letter-spacing:0.4px;margin-left:11px">library root</span></div>
<svg style="left:111px;top:1644px" width="9" height="16" viewBox="0 0 9 16"><path d="M1 1 L8 8.0 L1 15" fill="none" stroke="#CED0D6" stroke-width="2.2" stroke-linecap="round" stroke-linejoin="round"/></svg>
<svg style="left:142px;top:1636px" width="32" height="32" viewBox="0 0 32 32"><path d="M5 5 H12.3 L16.3 9 H27 Q29 9 29 11 V25 Q29 27 27 27 H5 Q3 27 3 25 V7 Q3 5 5 5 Z" fill="#43454A" stroke="#CED0D6" stroke-width="2" stroke-linejoin="round"/><rect x="16" y="16" width="18" height="18" rx="5" fill="#3D3123"/><rect x="19" y="19" width="12" height="12" rx="3" fill="#25324D" stroke="#548AF7" stroke-width="2"/></svg>
<div class="t" style="left:180px;top:1629px">jdk.attach<span class="g" style="font-weight:normal;font-size:27px;letter-spacing:0.4px;margin-left:11px">library root</span></div>
<svg style="left:111px;top:1692px" width="9" height="16" viewBox="0 0 9 16"><path d="M1 1 L8 8.0 L1 15" fill="none" stroke="#CED0D6" stroke-width="2.2" stroke-linecap="round" stroke-linejoin="round"/></svg>
<svg style="left:142px;top:1684px" width="32" height="32" viewBox="0 0 32 32"><path d="M5 5 H12.3 L16.3 9 H27 Q29 9 29 11 V25 Q29 27 27 27 H5 Q3 27 3 25 V7 Q3 5 5 5 Z" fill="#43454A" stroke="#CED0D6" stroke-width="2" stroke-linejoin="round"/><rect x="16" y="16" width="18" height="18" rx="5" fill="#3D3123"/><rect x="19" y="19" width="12" height="12" rx="3" fill="#25324D" stroke="#548AF7" stroke-width="2"/></svg>
<div class="t" style="left:180px;top:1677px">jdk.charsets<span class="g" style="font-weight:normal;font-size:27px;letter-spacing:0.4px;margin-left:11px">library root</span></div>
<svg style="left:111px;top:1740px" width="9" height="16" viewBox="0 0 9 16"><path d="M1 1 L8 8.0 L1 15" fill="none" stroke="#CED0D6" stroke-width="2.2" stroke-linecap="round" stroke-linejoin="round"/></svg>
<svg style="left:142px;top:1732px" width="32" height="32" viewBox="0 0 32 32"><path d="M5 5 H12.3 L16.3 9 H27 Q29 9 29 11 V25 Q29 27 27 27 H5 Q3 27 3 25 V7 Q3 5 5 5 Z" fill="#43454A" stroke="#CED0D6" stroke-width="2" stroke-linejoin="round"/><rect x="16" y="16" width="18" height="18" rx="5" fill="#3D3123"/><rect x="19" y="19" width="12" height="12" rx="3" fill="#25324D" stroke="#548AF7" stroke-width="2"/></svg>
<div class="t" style="left:180px;top:1725px">jdk.compiler<span class="g" style="font-weight:normal;font-size:27px;letter-spacing:0.4px;margin-left:11px">library root</span></div>
<svg style="left:111px;top:1788px" width="9" height="16" viewBox="0 0 9 16"><path d="M1 1 L8 8.0 L1 15" fill="none" stroke="#CED0D6" stroke-width="2.2" stroke-linecap="round" stroke-linejoin="round"/></svg>
<svg style="left:142px;top:1780px" width="32" height="32" viewBox="0 0 32 32"><path d="M5 5 H12.3 L16.3 9 H27 Q29 9 29 11 V25 Q29 27 27 27 H5 Q3 27 3 25 V7 Q3 5 5 5 Z" fill="#43454A" stroke="#CED0D6" stroke-width="2" stroke-linejoin="round"/><rect x="16" y="16" width="18" height="18" rx="5" fill="#3D3123"/><rect x="19" y="19" width="12" height="12" rx="3" fill="#25324D" stroke="#548AF7" stroke-width="2"/></svg>
<div class="t" style="left:180px;top:1773px">jdk.crypto.cryptoki<span class="g" style="font-weight:normal;font-size:27px;letter-spacing:0.4px;margin-left:11px">library root</span></div>
<svg style="left:111px;top:1836px" width="9" height="16" viewBox="0 0 9 16"><path d="M1 1 L8 8.0 L1 15" fill="none" stroke="#CED0D6" stroke-width="2.2" stroke-linecap="round" stroke-linejoin="round"/></svg>
<svg style="left:142px;top:1828px" width="32" height="32" viewBox="0 0 32 32"><path d="M5 5 H12.3 L16.3 9 H27 Q29 9 29 11 V25 Q29 27 27 27 H5 Q3 27 3 25 V7 Q3 5 5 5 Z" fill="#43454A" stroke="#CED0D6" stroke-width="2" stroke-linejoin="round"/><rect x="16" y="16" width="18" height="18" rx="5" fill="#3D3123"/><rect x="19" y="19" width="12" height="12" rx="3" fill="#25324D" stroke="#548AF7" stroke-width="2"/></svg>
<div class="t" style="left:180px;top:1821px">jdk.crypto.ec<span class="g" style="font-weight:normal;font-size:27px;letter-spacing:0.4px;margin-left:11px">library root</span></div>
<svg style="left:111px;top:1884px" width="9" height="16" viewBox="0 0 9 16"><path d="M1 1 L8 8.0 L1 15" fill="none" stroke="#CED0D6" stroke-width="2.2" stroke-linecap="round" stroke-linejoin="round"/></svg>
<svg style="left:142px;top:1876px" width="32" height="32" viewBox="0 0 32 32"><path d="M5 5 H12.3 L16.3 9 H27 Q29 9 29 11 V25 Q29 27 27 27 H5 Q3 27 3 25 V7 Q3 5 5 5 Z" fill="#43454A" stroke="#CED0D6" stroke-width="2" stroke-linejoin="round"/><rect x="16" y="16" width="18" height="18" rx="5" fill="#3D3123"/><rect x="19" y="19" width="12" height="12" rx="3" fill="#25324D" stroke="#548AF7" stroke-width="2"/></svg>
<div class="t" style="left:180px;top:1869px">jdk.dynalink<span class="g" style="font-weight:normal;font-size:27px;letter-spacing:0.4px;margin-left:11px">library root</span></div>
<svg style="left:111px;top:1932px" width="9" height="16" viewBox="0 0 9 16"><path d="M1 1 L8 8.0 L1 15" fill="none" stroke="#CED0D6" stroke-width="2.2" stroke-linecap="round" stroke-linejoin="round"/></svg>
<svg style="left:142px;top:1924px" width="32" height="32" viewBox="0 0 32 32"><path d="M5 5 H12.3 L16.3 9 H27 Q29 9 29 11 V25 Q29 27 27 27 H5 Q3 27 3 25 V7 Q3 5 5 5 Z" fill="#43454A" stroke="#CED0D6" stroke-width="2" stroke-linejoin="round"/><rect x="16" y="16" width="18" height="18" rx="5" fill="#3D3123"/><rect x="19" y="19" width="12" height="12" rx="3" fill="#25324D" stroke="#548AF7" stroke-width="2"/></svg>
<div class="t" style="left:180px;top:1917px">jdk.editpad<span class="g" style="font-weight:normal;font-size:27px;letter-spacing:0.4px;margin-left:11px">library root</span></div>
<svg style="left:111px;top:1980px" width="9" height="16" viewBox="0 0 9 16"><path d="M1 1 L8 8.0 L1 15" fill="none" stroke="#CED0D6" stroke-width="2.2" stroke-linecap="round" stroke-linejoin="round"/></svg>
<svg style="left:142px;top:1972px" width="32" height="32" viewBox="0 0 32 32"><path d="M5 5 H12.3 L16.3 9 H27 Q29 9 29 11 V25 Q29 27 27 27 H5 Q3 27 3 25 V7 Q3 5 5 5 Z" fill="#43454A" stroke="#CED0D6" stroke-width="2" stroke-linejoin="round"/><rect x="16" y="16" width="18" height="18" rx="5" fill="#3D3123"/><rect x="19" y="19" width="12" height="12" rx="3" fill="#25324D" stroke="#548AF7" stroke-width="2"/></svg>
<div class="t" style="left:180px;top:1965px">jdk.hotspot.agent<span class="g" style="font-weight:normal;font-size:27px;letter-spacing:0.4px;margin-left:11px">library root</span></div>
<svg style="left:111px;top:2028px" width="9" height="16" viewBox="0 0 9 16"><path d="M1 1 L8 8.0 L1 15" fill="none" stroke="#CED0D6" stroke-width="2.2" stroke-linecap="round" stroke-linejoin="round"/></svg>
<svg style="left:142px;top:2020px" width="32" height="32" viewBox="0 0 32 32"><path d="M5 5 H12.3 L16.3 9 H27 Q29 9 29 11 V25 Q29 27 27 27 H5 Q3 27 3 25 V7 Q3 5 5 5 Z" fill="#43454A" stroke="#CED0D6" stroke-width="2" stroke-linejoin="round"/><rect x="16" y="16" width="18" height="18" rx="5" fill="#3D3123"/><rect x="19" y="19" width="12" height="12" rx="3" fill="#25324D" stroke="#548AF7" stroke-width="2"/></svg>
<div class="t" style="left:180px;top:2013px">jdk.httpserver<span class="g" style="font-weight:normal;font-size:27px;letter-spacing:0.4px;margin-left:11px">library root</span></div>
</div>
<div class="a s33" style="left:1694px;top:775px;font-size:33px;letter-spacing:0.45px;line-height:48px;white-space:nowrap">Search Everywhere<span class="g" style="margin-left:15px">Double</span></div>
<svg style="left:2124px;top:784px" width="27" height="26" viewBox="0 0 27 26"><path d="M13.5 1.6 L25.4 13.2 L18.6 13.2 L18.6 24.6 L8.4 24.6 L8.4 13.2 L1.6 13.2 Z" fill="none" stroke="#6F737A" stroke-width="2.5" stroke-linejoin="miter" stroke-miterlimit="3"/></svg>
<div class="a s33" style="left:1694px;top:846px;font-size:33px;letter-spacing:0.45px;line-height:48px;white-space:nowrap">Go to File</div>
<svg style="left:1859px;top:856px" width="27" height="26" viewBox="0 0 27 26"><path d="M13.5 1.6 L25.4 13.2 L18.6 13.2 L18.6 24.6 L8.4 24.6 L8.4 13.2 L1.6 13.2 Z" fill="none" stroke="#6F737A" stroke-width="2.5" stroke-linejoin="miter" stroke-miterlimit="3"/></svg>
<svg style="left:1891px;top:858.5px" width="26" height="24" viewBox="0 0 26 24"><path d="M9 8 H17 V16 H9 Z M9 8 V5 A3.5 3.5 0 1 0 5.5 8.5 H9 M17 8 V5 A3.5 3.5 0 1 1 20.5 8.5 H17 M9 16 V19 A3.5 3.5 0 1 1 5.5 15.5 H9 M17 16 V19 A3.5 3.5 0 1 0 20.5 15.5 H17" fill="none" stroke="#6F737A" stroke-width="2.4"/></svg>
<div class="a g s33" style="left:1920px;top:846px;font-size:33px;line-height:48px">O</div>
<div class="a" style="left:1575px;top:889px;width:688px;height:458px;border-radius:17px;background:#000;box-shadow:0 10px 40px rgba(0,0,0,0.30)"></div>
<div class="a" style="left:1576px;top:890px;width:686px;height:456px;border-radius:16px;background:#43454A"></div>
<div class="a" style="left:1578px;top:892px;width:682px;height:452px;border-radius:14px;background:#2B2D30"></div>
<div class="b" style="left:1578px;top:906px;width:688px;text-align:center;letter-spacing:0.45px">New Java Class</div>
<svg style="left:1616px;top:984px" width="32" height="32" viewBox="0 0 32 32"><circle cx="16" cy="16" r="13.1" fill="#25324D" stroke="#548AF7" stroke-width="1.8"/><path d="M21 12.2 A6.2 6.2 0 1 0 21 19.8" fill="none" stroke="#548AF7" stroke-width="1.8"/></svg>
<div class="t" style="left:1660px;top:976px">com.example.helloworld.HelloWorld</div>
<div class="a" style="left:2098px;top:983px;width:2px;height:33px;background:#DFE1E5"></div>
<div class="a" style="left:1592px;top:1032px;width:656px;height:2px;background:#393B40"></div>
<div class="a" style="left:1600px;top:1042px;width:638px;height:48px;border-radius:10px;background:#2E436E"></div>
<svg style="left:1616px;top:1050px" width="32" height="32" viewBox="0 0 32 32"><circle cx="16" cy="16" r="13.1" fill="#25324D" stroke="#548AF7" stroke-width="1.8"/><path d="M21 12.2 A6.2 6.2 0 1 0 21 19.8" fill="none" stroke="#548AF7" stroke-width="1.8"/></svg>
<div class="t" style="left:1658px;top:1042px">Class</div>
<svg style="left:1616px;top:1098px" width="32" height="32" viewBox="0 0 32 32"><circle cx="16" cy="16" r="13.1" fill="#253627" stroke="#5FB865" stroke-width="1.8"/><path d="M12.5 10 H19.5 M16 10 V22 M12.5 22 H19.5" fill="none" stroke="#5FB865" stroke-width="1.6"/></svg>
<div class="t" style="left:1658px;top:1090px">Interface</div>
<svg style="left:1616px;top:1146px" width="32" height="32" viewBox="0 0 32 32"><circle cx="16" cy="16" r="13.1" fill="#25324D" stroke="#548AF7" stroke-width="1.8"/><path d="M12 23 V9.5 H17 Q21 9.5 21 13.2 Q21 17 17 17 H12 M17 17 L21.5 23" fill="none" stroke="#548AF7" stroke-width="1.6"/></svg>
<div class="t" style="left:1658px;top:1138px">Record</div>
<svg style="left:1616px;top:1194px" width="32" height="32" viewBox="0 0 32 32"><circle cx="16" cy="16" r="13.1" fill="#2F2740" stroke="#B589EC" stroke-width="1.8"/><path d="M20.5 9.5 H12 V22.5 H20.5 M12 16 H19.5" fill="none" stroke="#B589EC" stroke-width="1.6"/></svg>
<div class="t" style="left:1658px;top:1186px">Enum</div>
<svg style="left:1616px;top:1242px" width="32" height="32" viewBox="0 0 32 32"><circle cx="16" cy="16" r="13" fill="#253627"/><path d="M23.9 25.7 A12.9 12.9 0 1 1 29 16 Q28.5 20.7 25 20.7 Q21 20.7 21 17 V10.6" fill="none" stroke="#5FB865" stroke-width="1.8" stroke-linecap="round"/><circle cx="15.8" cy="15.6" r="4.7" fill="none" stroke="#5FB865" stroke-width="1.8"/></svg>
<div class="t" style="left:1658px;top:1234px">Annotation</div>
<svg style="left:1616px;top:1290px" width="32" height="32" viewBox="0 0 32 32"><circle cx="16" cy="16" r="13.1" fill="#3D3223" stroke="#F2C55C" stroke-width="1.8"/><path d="M18.5 9.2 L10.6 16.8 L21.8 15.6 L13.6 24.1" fill="none" stroke="#F2C55C" stroke-width="1.8" stroke-linejoin="round" stroke-linecap="round"/></svg>
<div class="t" style="left:1658px;top:1282px">Exception</div>
<svg style="left:26px;top:2120px" width="20" height="20" viewBox="0 0 20 20"><rect x="3" y="3" width="14" height="14" rx="3" fill="#25324D" stroke="#548AF7" stroke-width="2"/></svg>
<div class="t" style="left:52px;top:2105px;color:#ABADB2">HelloWorld</div>
<svg style="left:207px;top:2120px" width="9" height="16" viewBox="0 0 9 16"><path d="M1 1 L8 8.0 L1 15" fill="none" stroke="#ABADB2" stroke-width="2.2" stroke-linecap="round" stroke-linejoin="round"/></svg>
<svg style="left:236px;top:2112px" width="32" height="32" viewBox="0 0 32 32"><path d="M5 5 H12.3 L16.3 9 H27 Q29 9 29 11 V25 Q29 27 27 27 H5 Q3 27 3 25 V7 Q3 5 5 5 Z" fill="#25324D" stroke="#548AF7" stroke-width="2" stroke-linejoin="round"/></svg>
<div class="t" style="left:277px;top:2105px;color:#ABADB2">src</div>
<svg style="left:3708px;top:2116px" width="30" height="30" viewBox="0 0 30 30"><path d="M27 2.5 L27 12 Q27 27.5 14 27.5 Q2.5 27.5 2.5 16 Q2.5 3 18 2.5 Z" fill="none" stroke="#CED0D6" stroke-width="2.2" stroke-linejoin="round"/></svg>
<svg style="left:3770px;top:2112px" width="36.0" height="36.0" viewBox="0 0 48 48"><g fill="none" stroke="#CED0D6" stroke-width="2.93" stroke-linecap="round"><path d="M10.9 11.4 Q21 7.5 32 12 Q39.8 16 39.5 22.5 Q38.5 31.8 26.5 31.8 Q16.6 31.5 16.6 25.8 Q17 22.5 21.2 22.5 Q23.5 22.5 24.2 23.8"/><path d="M36.8 36.1 Q31 38.6 24 38.4 Q9.6 37 9.6 26 Q10 16.6 21.2 16.6 Q29.8 17 29.8 22.5 Q29.5 25 26.5 25 Q24.8 25 24.2 24.5"/></g></svg></div>
</body></html>
